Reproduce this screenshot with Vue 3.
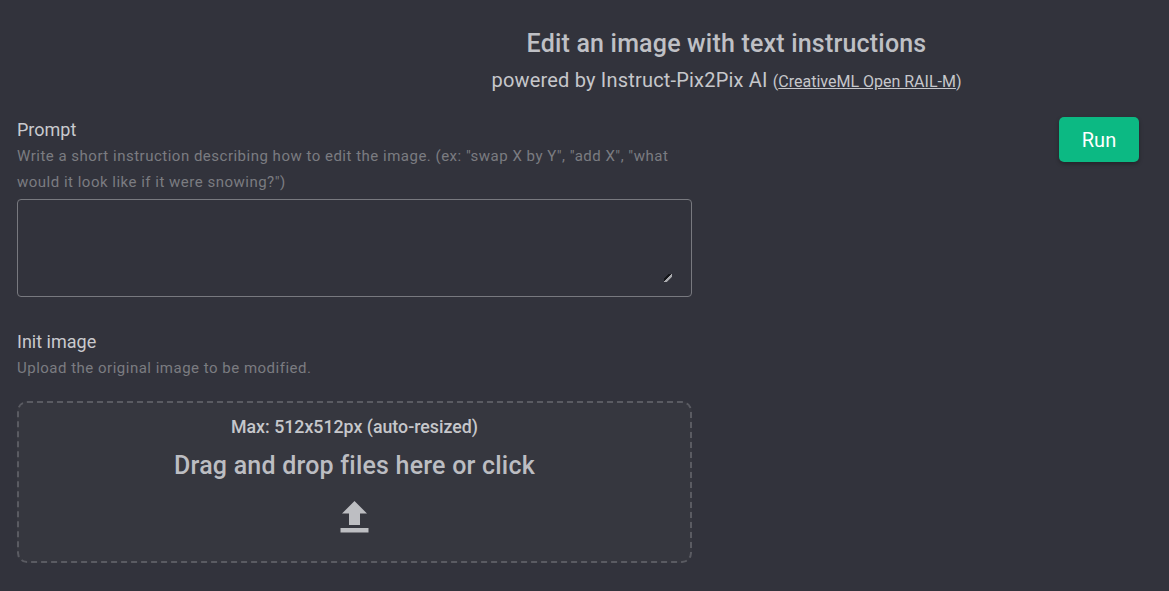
<template>
  <div class="page">
    <header class="hero">
      <h1>Edit an image with text instructions</h1>
      <p>powered by Instruct-Pix2Pix AI <small>(<a href="#">CreativeML Open RAIL-M</a>)</small></p>
    </header>

    <div class="content">
      <form class="form" @submit.prevent>
        <div class="field prompt-field">
          <label>Prompt</label>
          <p class="hint">Write a short instruction describing how to edit the image. (ex: "swap X by Y", "add X", "what would it look like if it were snowing?")</p>
          <div class="input-box">
            <textarea v-model="prompt"></textarea>
          </div>
        </div>

        <div class="field">
          <label>Init image</label>
          <p class="hint">Upload the original image to be modified.</p>
          <div class="dropzone">
            <div class="max">Max: 512x512px (auto-resized)</div>
            <div class="drag">Drag and drop files here or click</div>
            <svg class="upload" width="32" height="32" viewBox="0 0 32 32">
              <path d="M15.5 0 L28 12.5 H21 V24 H10 V12.5 H3 Z" />
              <rect x="1.5" y="27" width="28" height="4.5" />
            </svg>
          </div>
        </div>
      </form>

      <button class="run">Run</button>
    </div>
  </div>
</template>

<script setup>
import { ref } from 'vue';

const prompt = ref('');
</script>

<style>
html, body { background: #32333c; }
</style>

<style scoped>
.page {
  height: 591px; overflow: hidden; background: #32333c; color: #c6c7cb;
  font-family: Roboto, "Liberation Sans", sans-serif;
}

.hero { padding: 28px 0 0 284px; text-align: center; }
.hero h1 { margin: 0; font-size: 25px; line-height: 32px; font-weight: 500; letter-spacing: 0.19px; color: #bfc0c5; }
.hero p { margin: 6px 0 0; font-size: 20px; line-height: 28px; letter-spacing: 0.19px; color: #c6c7cb; }
.hero small { font-size: 16px; letter-spacing: 0; }
.hero a { color: #c6c7cb; }

.content { display: flex; justify-content: space-between; align-items: flex-start; padding: 21px 30px 0 17px; }
.form { width: 675px; }

.field label { display: block; font-size: 18px; line-height: 26px; color: #c9cace; }
.prompt-field { margin-bottom: 32px; }
.hint { margin: 0; font-size: 15px; line-height: 26px; letter-spacing: 0.5px; color: #7b7c81; }

.input-box {
  box-sizing: border-box; height: 98px; margin-top: 4px; padding: 12px 17px;
  border: 1px solid #78797f; border-radius: 4px;
}
textarea {
  display: block; box-sizing: border-box; width: 100%; height: 100%; padding: 0;
  background: transparent; border: none; color: #c6c7cb; outline: none;
  font-family: inherit; font-size: 16px;
}
textarea::-webkit-resizer {
  background: linear-gradient(135deg, transparent 28%, #15161a 28%, #15161a 46%, #a9aaae 46%, #a9aaae 64%, #55565c 64%, #55565c 74%, transparent 74%) no-repeat right 2px bottom 2px / 8px 8px;
}

.dropzone {
  box-sizing: border-box; height: 162px; margin-top: 20px; padding-top: 13px;
  display: flex; flex-direction: column; align-items: center;
  background: #36373f; border: 2px dashed #5a5b62; border-radius: 10px;
}
.max { font-size: 17.75px; line-height: 22px; font-weight: 500; color: #c6c7cb; }
.drag { margin-top: 11px; font-size: 25px; line-height: 34px; font-weight: 500; letter-spacing: 0.21px; color: #bcbdc2; }
.upload { margin-top: 18px; fill: #bdbec2; }

.run {
  width: 80px; height: 45px;
  background: #0cb983; color: #fff; border: none; border-radius: 5px;
  font-family: inherit; font-size: 20px; cursor: pointer;
  box-shadow: 0 2px 4px rgba(0,0,0,0.3);
}
</style>
